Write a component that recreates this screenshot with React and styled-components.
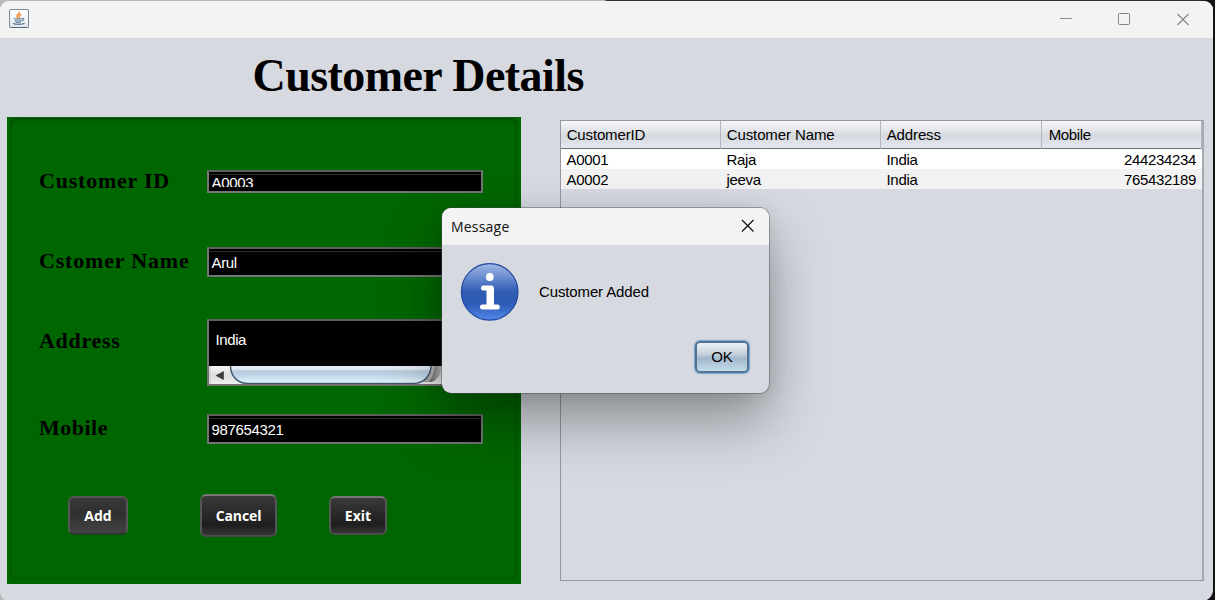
import React from "react";
import styled, { createGlobalStyle } from "styled-components";

const sans = `"Liberation Sans", Arial, sans-serif`;
const serif = `"Liberation Serif", "Times New Roman", serif`;
const ui = `"Open Sans", "Noto Sans", sans-serif`;

const Global = createGlobalStyle`
  * { box-sizing: border-box; }
  html, body { margin: 0; width: 1215px; height: 600px; overflow: hidden; background: #161616; }
`;

const Desktop = styled.div`
  position: relative;
  height: 600px;
  padding: 1px 2px 0 0;
  background: linear-gradient(90deg, #b9b9b9 605px, #333135 606px, #333135 1195px, #141414 1208px);
`;

const Window = styled.div`
  height: 600px;
  border-radius: 9px 9px 11px 9px;
  overflow: hidden;
  background: #d6d9e0;
`;

const TitleBar = styled.header`
  height: 37px;
  display: flex;
  justify-content: space-between;
  background: #f3f3f3;
`;

const AppIcon = styled.div`
  width: 20px;
  height: 19px;
  margin: 8px 0 0 9px;
  border: 1px solid #7a8998;
  border-bottom-color: #526a80;
  border-radius: 2px;
  background: linear-gradient(#fff, #e4e8ec);
  svg { display: block; }
`;

const Controls = styled.div`
  display: flex;
  gap: 46px;
  padding: 12px 24px 0 0;
  svg { display: block; }
`;

const Heading = styled.h1`
  margin: 0;
  height: 79px;
  padding: 12px 0 0 252.5px;
  font: bold 46px/52px ${serif};
  letter-spacing: -0.56px;
  color: #000;
`;

const Content = styled.main`
  display: flex;
  align-items: flex-start;
  padding-left: 7px;
  gap: 39px;
`;

const Panel = styled.section`
  width: 514px;
  height: 467px;
  padding: 1px 4px 5px 3px;
  background: #006600;
`;

const PanelInner = styled.div`
  height: 461px;
  padding: 52px 0 0 29px;
  border-radius: 6px;
  box-shadow: inset 0 0 3px 0 #004600, inset 0 2px 3px -1px #003c00;
`;

const FormRow = styled.div`
  display: flex;
  align-items: flex-start;
  height: ${(p) => p.$h}px;
`;

const Label = styled.label`
  flex: 0 0 168px;
  margin-top: ${(p) => p.$top}px;
  font: bold 22px/26px ${serif};
  letter-spacing: ${(p) => p.$ls}px;
  color: #000;
  white-space: nowrap;
`;

const Field = styled.div`
  width: 276px;
  height: ${(p) => p.$h}px;
  padding: ${(p) => p.$pt}px 2.5px 0;
  border: 2px solid #747474;
  border-top-color: #5e5e5e;
  background: ${(p) => p.$plain ? "#000" : "linear-gradient(#000 2px, #2b2b2b 2px, #2b2b2b 3px, #000 3px)"};
  font: 15px/17px ${sans};
  letter-spacing: ${(p) => p.$ls || 0}px;
  color: #fff;
`;

const Clip = styled.div`
  height: ${(p) => p.$h}px;
  overflow: hidden;
`;

const AreaField = styled(Field)`
  padding: 0;
  display: flex;
  flex-direction: column;
`;

const AreaText = styled.div`
  height: 46px;
  padding: 10px 0 0 6.5px;
  letter-spacing: -0.4px;
`;

const ScrollBar = styled.div`
  height: 18px;
  display: flex;
  overflow: hidden;
  svg { display: block; flex: none; }
`;

const Buttons = styled.div`
  display: flex;
  align-items: flex-start;
  padding-left: 29px;
`;

const DarkButton = styled.button`
  width: ${(p) => p.$w}px;
  height: ${(p) => p.$h}px;
  margin: ${(p) => p.$mt || 0}px ${(p) => p.$mr || 0}px 0 0;
  padding: 0;
  border: 2px solid #565656;
  border-top-color: ${(p) => p.$pressed ? "#555" : "#777"};
  border-bottom-color: ${(p) => p.$pressed ? "#2d3b2d" : "#4a4a4a"};
  border-radius: 6px;
  background: ${(p) => p.$pressed
    ? "linear-gradient(#383838, #303030 45%, #3c3c3c 80%, #414141)"
    : "linear-gradient(#3a3a3a, #292929 45%, #1e1e1e 75%, #353535)"};
  font: bold 14px/18px ${ui};
  letter-spacing: ${(p) => p.$ls || 0}px;
  color: #fff;
`;

const Table = styled.section`
  width: 644px;
  height: 461px;
  margin-top: 3px;
  border: 1px solid #9297a1;
  border-right: 2px solid #a5a9b3;
`;

const TableRow = styled.div`
  display: grid;
  grid-template-columns: 160px 160px 161px 160px;
  height: 20px;
  background: ${(p) => p.$odd ? "#f2f2f2" : "#fff"};
  font: 15px/21px ${sans};
  color: #000;
`;

const HeadRow = styled(TableRow)`
  height: 28px;
  border-bottom: 1px solid #6b6e75;
  background: linear-gradient(#f8f8fa, #e0e2e6 40%, #d5d8dd 55%, #e4e8f0);
  line-height: 28px;
`;

const Cell = styled.div`
  padding: 0 6px 0 5.5px;
  text-align: ${(p) => p.$right ? "right" : "left"};
  letter-spacing: ${(p) => p.$ls || 0}px;
  white-space: nowrap;
`;

const HeadCell = styled(Cell)`
  padding-left: ${(p) => p.$pl || 5.7}px;
  border-right: 1px solid #b2b5bb;
`;

const Dialog = styled.div`
  position: absolute;
  left: 442px;
  top: 208px;
  width: 327px;
  height: 185px;
  border-radius: 9px;
  background: #d6d9e0;
  box-shadow: 0 0 0 1px rgba(70, 75, 80, 0.42), 0 28px 56px rgba(0, 0, 0, 0.35), 0 2px 20px rgba(0, 0, 0, 0.1);
`;

const DialogTitle = styled.div`
  height: 37px;
  display: flex;
  justify-content: space-between;
  padding: 11px 15px 0 9px;
  border-radius: 9px 9px 0 0;
  background: #f3f3f3;
  font: 14px/15px ${ui};
  letter-spacing: 0.2px;
  color: #111;
`;

const DialogBody = styled.div`
  display: flex;
  align-items: center;
  gap: 20px;
  height: 60px;
  margin-top: 17px;
  padding-left: 18px;
  font: 15px/18px ${sans};
  letter-spacing: -0.13px;
  color: #000;
`;

const DialogFooter = styled.div`
  display: flex;
  justify-content: flex-end;
  padding: 19px 20px 0 0;
`;

const OkButton = styled.button`
  width: 54px;
  height: 32px;
  padding: 0;
  border: 2px solid #547390;
  border-radius: 5px;
  background: linear-gradient(#eef2f6, #c3d0dc 40%, #a3b8ca 55%, #c3dbee);
  box-shadow: 0 0 1px 1px #73a4d1;
  font: 15px/18px ${sans};
  color: #000;
`;

const JavaIcon = () => (
  <svg width="18" height="17" viewBox="0 0 18 17" fill="none" strokeLinecap="round">
    <path d="M9.4 2.3c.7 1.7-2.8 2.4-2.5 4.1.1.8.8 1.1 1 2M11 4.4c-1.6.8-2.3 1.5-1.6 2.4.5.7 0 1.2-.5 1.7" stroke="#ee8a3a" strokeWidth="1.4" />
    <path d="M4.2 8.6c1.3.8 6.4.8 7.8 0M5 10.5c1.4.7 4.9.7 6.2 0M5.8 12.2c1.1.5 3.6.5 4.6 0M12 8.6c2.3-.7 2.2 1.6.2 2.2" stroke="#7592aa" strokeWidth="1.2" />
    <path d="M3.3 13.6c1.5 1.1 9 1.2 10.8-.1" stroke="#617f9a" strokeWidth="1.3" />
  </svg>
);

const InfoIcon = () => (
  <svg width="59" height="60" viewBox="0 0 59 60">
    <defs>
      <linearGradient id="ball" x1="0" y1="0" x2="0" y2="1">
        <stop offset="0" stopColor="#a1b7e5" />
        <stop offset=".25" stopColor="#688bd0" />
        <stop offset=".5" stopColor="#2f5bb3" />
        <stop offset=".72" stopColor="#2f5cb8" />
        <stop offset="1" stopColor="#5288ec" />
      </linearGradient>
    </defs>
    <circle cx="29.7" cy="29.9" r="28.3" fill="url(#ball)" stroke="#2249a0" strokeWidth="1.2" />
    <circle cx="29.8" cy="15" r="3.9" fill="#fff" />
    <path d="M23.5 26.1h7.8v18.6M22.5 45h14.8" fill="none" stroke="#fff" strokeWidth="5" strokeLinecap="round" strokeLinejoin="round" />
    <path d="M26.5 26h7.3v19h-7.3z" fill="#fff" />
  </svg>
);

const Scroller = () => (
  <svg width="272" height="20" viewBox="0 0 272 20">
    <defs>
      <linearGradient id="thumb" x1="0" y1="0" x2="0" y2="1">
        <stop offset="0" stopColor="#e9eff6" />
        <stop offset=".22" stopColor="#dbe5ef" />
        <stop offset=".28" stopColor="#b4c9dc" />
        <stop offset=".6" stopColor="#c5d9e9" />
        <stop offset="1" stopColor="#e8f8ff" />
      </linearGradient>
      <linearGradient id="button" x1="0" y1="0" x2="0" y2="1">
        <stop offset="0" stopColor="#f5f5f5" />
        <stop offset=".5" stopColor="#dcdddf" />
        <stop offset="1" stopColor="#f4f4f4" />
      </linearGradient>
      <linearGradient id="track" x1="0" y1="0" x2="1" y2="0">
        <stop offset="0" stopColor="#333" />
        <stop offset="1" stopColor="#c6c6c8" />
      </linearGradient>
    </defs>
    <path d="M0 0h272v20H0z" fill="url(#button)" />
    <path d="M1 0v20" stroke="#bfc0c2" />
    <path d="M6.5 9.5 14.8 5v9z" fill="#3b3b3b" />
    <path d="M220 0h13q-1 12-10 16h-9z" fill="url(#track)" />
    <path d="M204 18c11-.5 17.5-9 17.5-18h4q-1 13-8 18z" fill="#dfe0e3" fillOpacity=".6" />
    <path d="M21.5 0c0 9 6 17 17 17.5h166c11-.5 17.5-8.500 17.5-17.500z" fill="url(#thumb)" />
    <path d="M21.5 0c0 9 6 17 17 17.500h166c11-.5 17.5-8.500 17.500-17.500" fill="none" stroke="#3e5870" strokeWidth="1.4" />
  </svg>
);

const records = [
  ["A0001", "Raja", "India", "244234234"],
  ["A0002", "jeeva", "India", "765432189"],
];

export default function App() {
  return (
    <Desktop>
      <Global />
      <Window>
        <TitleBar>
          <AppIcon><JavaIcon /></AppIcon>
          <Controls>
            <svg width="12" height="12"><path d="M0 5.500h12" stroke="#8f8f8f" /></svg>
            <svg width="12" height="12"><rect x=".5" y=".5" width="11" height="11" rx="1" fill="none" stroke="#858585" /></svg>
            <svg width="13" height="13"><path d="M1.500 1l11 11M12.500 1l-11 11" stroke="#858585" strokeWidth="1.1" /></svg>
          </Controls>
        </TitleBar>
        <Heading>Customer Details</Heading>
        <Content>
          <Panel>
            <PanelInner>
              <FormRow $h={77}>
                <Label $top={-2} $ls={0.78}>Customer ID</Label>
                <Field $h={23} $pt={2} $ls={-0.35}><Clip $h={13}>A0003</Clip></Field>
              </FormRow>
              <FormRow $h={72}>
                <Label $top={1} $ls={0.82}>Cstomer Name</Label>
                <Field $h={30} $pt={5} $ls={-0.35}>Arul</Field>
              </FormRow>
              <FormRow $h={95}>
                <Label $top={9} $ls={0.7}>Address</Label>
                <AreaField $h={67} $plain>
                  <AreaText>India</AreaText>
                  <ScrollBar><Scroller /></ScrollBar>
                </AreaField>
              </FormRow>
              <FormRow $h={80}>
                <Label $top={1} $ls={0.5}>Mobile</Label>
                <Field $h={30} $pt={5} $ls={-0.34}>987654321</Field>
              </FormRow>
              <Buttons>
                <DarkButton $w={60} $h={39} $mt={2} $mr={72} $pressed>Add</DarkButton>
                <DarkButton $w={77} $h={43} $mr={52} $ls={-0.1}>Cancel</DarkButton>
                <DarkButton $w={58} $h={39} $mt={2}>Exit</DarkButton>
              </Buttons>
            </PanelInner>
          </Panel>
          <Table>
            <HeadRow>
              <HeadCell $ls={-0.15}>CustomerID</HeadCell>
              <HeadCell $ls={-0.1}>Customer Name</HeadCell>
              <HeadCell $ls={-0.12}>Address</HeadCell>
              <HeadCell $pl={6.7} $ls={-0.35}>Mobile</HeadCell>
            </HeadRow>
            {records.map(([id, name, address, mobile], i) => (
              <TableRow key={id} $odd={i % 2 === 1}>
                <Cell $ls={-0.3}>{id}</Cell>
                <Cell $ls={-0.3}>{name}</Cell>
                <Cell $ls={-0.3}>{address}</Cell>
                <Cell $right $ls={-0.34}>{mobile}</Cell>
              </TableRow>
            ))}
          </Table>
        </Content>
      </Window>
      <Dialog>
        <DialogTitle>
          Message
          <svg width="13" height="13"><path d="M1 1l11.500 11.500M12.500 1L1 12.500" stroke="#111" strokeWidth="1.2" /></svg>
        </DialogTitle>
        <DialogBody><InfoIcon />Customer Added</DialogBody>
        <DialogFooter><OkButton>OK</OkButton></DialogFooter>
      </Dialog>
    </Desktop>
  );
}
